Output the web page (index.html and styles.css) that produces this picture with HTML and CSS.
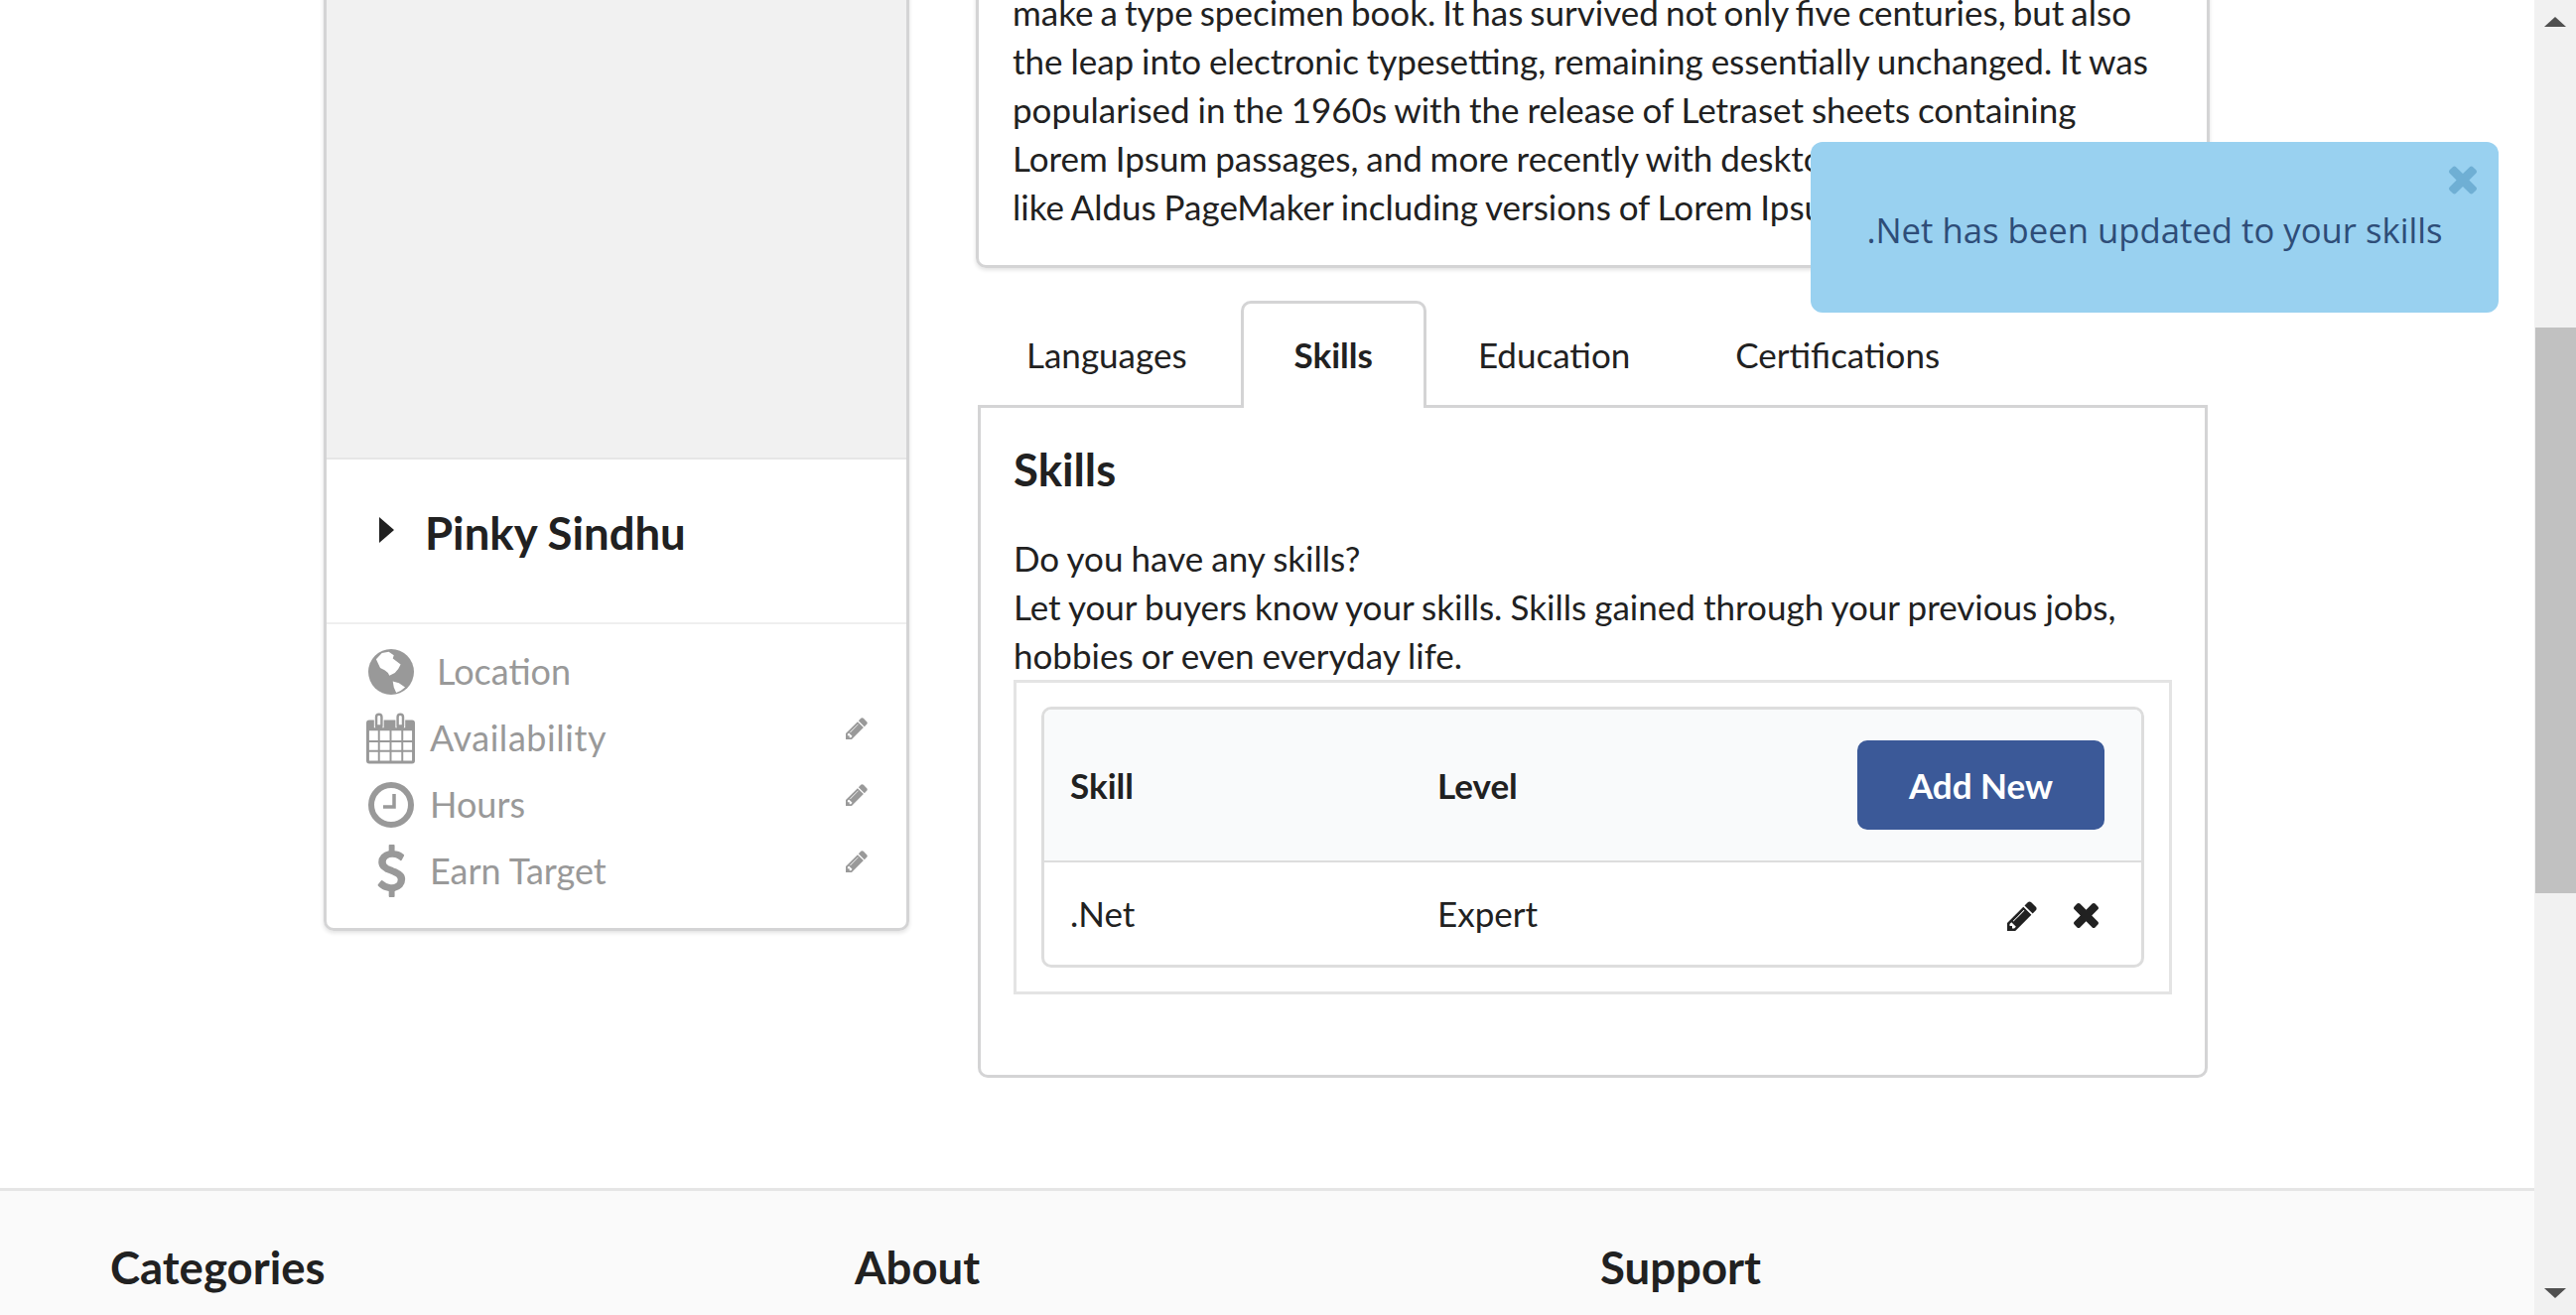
FILE: index.html

```html
<!DOCTYPE html>
<html lang="en">
<head>
  <meta charset="UTF-8" />
  <title>Profile</title>
  <link rel="stylesheet" href="styles.css">
</head>
<body>
  <svg class="svg-defs" width="0" height="0">
    <symbol id="i-pencil" viewBox="128 128 1536 1536"><path d="M491 1536l91-91-235-235-91 91v107h128v128h107zm523-928q0-22-22-22-10 0-17 7l-542 542q-7 7-7 17 0 22 22 22 10 0 17-7l542-542q7-7 7-17zm-54-192l416 416-832 832h-416v-416zm683 96q0 53-37 90l-166 166-416-416 166-165q36-38 90-38 53 0 91 38l235 234q37 39 37 91z"/></symbol>
    <symbol id="i-close" viewBox="110 366 1188 1188"><path d="M1298 1322q0 40-28 68l-136 136q-28 28-68 28t-68-28l-294-294-294 294q-28 28-68 28t-68-28l-136-136q-28-28-28-68t28-68l294-294-294-294q-28-28-28-68t28-68l136-136q28-28 68-28t68 28l294 294 294-294q28-28 68-28t68 28l136 136q28 28 28 68t-28 68l-294 294 294 294q28 28 28 68z"/></symbol>
  </svg>

  <div class="page">
    <main class="main">
      <aside class="seller-card">
        <div class="seller-photo"></div>
        <div class="seller-name">
          <span class="caret"></span>
          <h2>Pinky Sindhu</h2>
        </div>
        <ul class="seller-info">
          <li class="info-row location">
            <svg class="info-icon globe" viewBox="0 0 134 134">
              <circle cx="67" cy="67" r="67" fill="#999"/>
              <path fill="#fff" d="M23 30L40 12l20-4 15 10-3 10 23 17-7 13-10 12-16 8-4-8-10-8-13-7zM72 95l18 5 18 12-13 10-13 6-7-16z"/>
            </svg>
            <span>Location</span>
          </li>
          <li class="info-row">
            <svg class="info-icon calendar" viewBox="0 0 50 52">
              <path fill="#999" d="M3 7h44a3 3 0 0 1 3 3v39a3 3 0 0 1-3 3H3a3 3 0 0 1-3-3V10a3 3 0 0 1 3-3z"/>
              <path fill="#fff" d="M8 3a5 3 0 0 1 10 0v12H8zM30 3a5 3 0 0 1 10 0v12H30z"/>
              <path fill="#999" d="M9 4a4 4 0 0 1 8 0v9a4 4 0 0 1-8 0zM31 4a4 4 0 0 1 8 0v9a4 4 0 0 1-8 0z"/>
              <path fill="#fff" d="M11.500 4a1.500 1.500 0 0 1 3 0v8h-3zM33.500 4a1.500 1.500 0 0 1 3 0v8h-3z"/>
              <path fill="#fff" d="M3 18h9v10H3zM14 18h10v10H14zM26 18h10v10H26zM38 18h9v10h-9zM3 30h9v8H3zM14 30h10v8H14zM26 30h10v8H26zM38 30h9v8h-9zM3 40h9v9H3zM14 40h10v9H14zM26 40h10v9H26zM38 40h9v9h-9z"/>
            </svg>
            <span class="avail">Availability</span>
            <svg class="edit-icon"><use href="#i-pencil"/></svg>
          </li>
          <li class="info-row">
            <svg class="info-icon clock" viewBox="0 0 46 46">
              <circle cx="23" cy="23" r="20" fill="none" stroke="#999" stroke-width="6"/>
              <path fill="none" stroke="#999" stroke-width="3.5" d="M26 12v13H15"/>
            </svg>
            <span>Hours</span>
            <svg class="edit-icon"><use href="#i-pencil"/></svg>
          </li>
          <li class="info-row">
            <span class="info-icon dollar-box">
              <svg class="dollar" viewBox="430 0 940 1792"><path fill="#999" d="M1362 1185q0 153-99.5 263.5t-258.5 136.5v175q0 14-9 23t-23 9h-135q-13 0-22.5-9.5t-9.5-22.5v-175q-66-9-127.5-31t-101.5-44.5-74-48-46.5-37.5-17.5-18q-17-21-2-41l103-135q7-10 23-12 15-2 24 9l2 2q113 99 243 125 37 8 74 8 81 0 142.5-43t61.5-122q0-28-15-53t-33.5-42-58.5-37.5-66-32-80-32.5q-39-16-61.5-25t-61.5-26.5-62.5-31-56.5-35.5-53.5-42.5-43.5-49-35.5-58-21-66.5-8.5-78q0-138 98-242t255-134v-180q0-13 9.5-22.5t22.5-9.5h135q14 0 23 9t9 23v176q57 6 110.5 23t87 33.5 63.5 37.5 39 29 15 14q17 18 5 38l-81 146q-8 15-23 16-14 3-27-7-3-3-14.5-12t-39-26.5-58.5-32-74.5-26-85.5-11.5q-95 0-155 43t-60 111q0 26 8.5 48t29.5 41.5 39.5 33 56 31 60.5 27 70 27.5q53 20 81 31.5t76 35 75.5 42.5 62 50 53 63.5 31.5 76.5 13 94z"/></svg>
            </span>
            <span>Earn Target</span>
            <svg class="edit-icon"><use href="#i-pencil"/></svg>
          </li>
        </ul>
      </aside>

      <section class="profile">
        <div class="description">
          <p>make a type specimen book. It has survived not only five centuries, but also the leap into electronic typesetting, remaining essentially unchanged. It was popularised in the 1960s with the release of Letraset sheets containing Lorem Ipsum passages, and more recently with desktop publishing software like Aldus PageMaker including versions of Lorem Ipsum.</p>
        </div>

        <div class="tabs">
          <a class="tab">Languages</a>
          <a class="tab active">Skills</a>
          <a class="tab">Education</a>
          <a class="tab">Certifications</a>
        </div>

        <div class="tab-panel">
          <h3>Skills</h3>
          <p>Do you have any skills?<br>Let your buyers know your skills. Skills gained through your previous jobs, hobbies or even everyday life.</p>
          <div class="table-box">
            <table class="skills-table">
              <thead>
                <tr>
                  <th class="col-skill">Skill</th>
                  <th>Level</th>
                  <th class="col-action"><button class="add-btn">Add New</button></th>
                </tr>
              </thead>
              <tbody>
                <tr>
                  <td>.Net</td>
                  <td>Expert</td>
                  <td class="col-action">
                    <div class="row-actions">
                      <svg class="row-pencil"><use href="#i-pencil"/></svg>
                      <svg class="row-close"><use href="#i-close"/></svg>
                    </div>
                  </td>
                </tr>
              </tbody>
            </table>
          </div>
        </div>
      </section>
    </main>

    <footer class="footer">
      <h4>Categories</h4>
      <h4>About</h4>
      <h4>Support</h4>
    </footer>
  </div>

  <div class="scrollbar">
    <span class="arrow-up"></span>
    <div class="thumb"></div>
    <span class="arrow-down"></span>
  </div>

  <div class="toast">
    <svg class="toast-close"><use href="#i-close"/></svg>
    <span>.Net has been updated to your skills</span>
  </div>
</body>
</html>
```

FILE: styles.css

```css
html, body {
  height: 100%;
}
body {
  margin: 0;
  display: flex;
  overflow: hidden;
  font-family: Lato, "Liberation Sans", sans-serif;
  font-size: 35px;
  line-height: 49px;
  color: #212121;
  background: #fff;
}
h2, h3, h4, p, ul {
  margin: 0;
  padding: 0;
}
.svg-defs {
  position: absolute;
}
.page {
  flex: 1;
  min-width: 0;
  height: 1325px;
  overflow: hidden;
}
.main {
  display: flex;
  align-items: flex-start;
  gap: 67px;
  margin-top: -40px;
  padding-left: 326px;
}

/* seller card */
.seller-card {
  width: 590px;
  flex: none;
  box-sizing: border-box;
  border: 3px solid #d4d4d5;
  border-radius: 10px;
  box-shadow: 0 2px 4px rgba(0, 0, 0, .12);
}
.seller-photo {
  height: 498px;
  background: #f1f1f1;
  border-bottom: 2px solid #e6e6e6;
}
.seller-name {
  display: flex;
  align-items: center;
  gap: 31px;
  box-sizing: border-box;
  height: 166px;
  padding: 0 0 16px 53px;
  border-bottom: 2px solid #efefef;
}
.seller-name h2 {
  font-size: 45.5px;
  font-weight: 700;
  line-height: 58px;
}
.caret {
  width: 0;
  height: 0;
  margin-bottom: 6px;
  border-left: 15px solid #212121;
  border-top: 13px solid transparent;
  border-bottom: 13px solid transparent;
}
.seller-info {
  list-style: none;
  padding: 14px 39px 24px 40px;
  font-size: 36px;
  color: #999;
}
.info-row {
  display: flex;
  align-items: center;
  height: 67px;
}
.info-icon {
  width: 50px;
  flex: none;
  margin-right: 14px;
}
.location span {
  margin-left: 7px;
}
.avail {
  letter-spacing: .55px;
}
.globe {
  width: 46px;
  height: 46px;
  margin-left: 2px;
  margin-right: 16px;
}
.calendar {
  width: 49px;
  height: 52px;
  margin-right: 15px;
}
.clock {
  width: 46px;
  height: 46px;
  margin-left: 2px;
  margin-right: 16px;
}
.dollar-box {
  display: flex;
  justify-content: center;
}
.dollar {
  width: 29px;
  height: 53px;
}
.edit-icon {
  width: 22px;
  height: 22px;
  margin-left: auto;
  margin-bottom: 20px;
  fill: #999;
}

/* right column */
.profile {
  width: 1243px;
  flex: none;
}
.description {
  box-sizing: border-box;
  height: 310px;
  padding: 25px 34px 0;
  border: 3px solid #d4d4d5;
  border-radius: 10px;
  box-shadow: 0 2px 4px rgba(0, 0, 0, .12);
  word-spacing: -1.1px;
}
.description p::first-line {
  word-spacing: -1.900px;
}
.tabs {
  display: flex;
  margin: 33px 0 -3px -3px;
}
.tab {
  box-sizing: border-box;
  height: 108px;
  padding: 27px 51px 0;
  border: 3px solid transparent;
  border-bottom: 0;
  border-radius: 10px 10px 0 0;
}
.tab.active + .tab,
.tab:last-child {
  margin-left: -2px;
}
.tab.active {
  position: relative;
  font-weight: 700;
  background: #fff;
  border-color: #d4d4d5;
}
.tab-panel {
  box-sizing: border-box;
  margin: 0 2px;
  height: 678px;
  padding: 33px 33px 0;
  border: 3px solid #d4d4d5;
  border-radius: 0 0 10px 10px;
}
.tab-panel h3 {
  margin-bottom: 36px;
  font-size: 45.5px;
  font-weight: 700;
  line-height: 58px;
}
.tab-panel p {
  word-spacing: -.8px;
}
.table-box {
  padding: 24px 25px;
  border: 3px solid #e4e4e4;
}
.skills-table {
  width: 100%;
  border-collapse: separate;
  border-spacing: 0;
  border: 3px solid #ddd;
  border-radius: 10px;
}
.skills-table th {
  height: 152px;
  padding: 0 26px;
  text-align: left;
  font-weight: 700;
  background: #f9fafb;
  border-bottom: 2px solid #ddd;
}
.skills-table th:first-child {
  border-top-left-radius: 7px;
}
.skills-table th:last-child {
  border-top-right-radius: 7px;
}
.skills-table td {
  height: 103px;
  padding: 0 26px;
}
.col-skill {
  width: 318px;
}
.col-action {
  text-align: right;
}
.skills-table th.col-action {
  width: 300px;
  padding-right: 37px;
  text-align: right;
}
.add-btn {
  width: 249px;
  height: 90px;
  padding: 0;
  border: 0;
  border-radius: 10px;
  font: 700 35px Lato, "Liberation Sans", sans-serif;
  color: #fff;
  background: #3b5998;
}
.row-actions {
  display: flex;
  justify-content: flex-end;
  align-items: center;
  gap: 37px;
  margin: 4px 17px 0 0;
}
.row-pencil {
  width: 30px;
  height: 30px;
  fill: #212121;
}
.row-close {
  width: 25px;
  height: 25px;
  fill: #212121;
}

/* footer */
.footer {
  display: grid;
  grid-template-columns: 750px 751px 1fr;
  margin-top: 111px;
  padding: 48px 0 0 111px;
  height: 200px;
  background: #fafafa;
  border-top: 3px solid #e5e5e5;
}
.footer h4 {
  font-size: 45.5px;
  font-weight: 700;
  line-height: 58px;
}

/* scrollbar */
.scrollbar {
  position: relative;
  width: 42px;
  flex: none;
  height: 1325px;
  background: #f1f1f1;
}
.thumb {
  position: absolute;
  top: 330px;
  left: 1px;
  right: 0;
  height: 570px;
  background: #c1c1c1;
}
.arrow-up, .arrow-down {
  position: absolute;
  left: 10px;
  width: 0;
  height: 0;
  border-left: 11px solid transparent;
  border-right: 11px solid transparent;
}
.arrow-up {
  top: 17px;
  border-bottom: 10px solid #505050;
}
.arrow-down {
  top: 1298px;
  border-top: 10px solid #505050;
}

/* toast */
.toast {
  position: fixed;
  top: 143px;
  left: 1824px;
  box-sizing: border-box;
  width: 693px;
  height: 172px;
  padding-top: 5px;
  display: flex;
  align-items: center;
  justify-content: center;
  border-radius: 12px;
  font-family: "Open Sans", sans-serif;
  font-size: 34.700px;
  color: #2e4d78;
  background: #99d1f0;
}
.toast-close {
  position: absolute;
  top: 24px;
  right: 22px;
  width: 28px;
  height: 29px;
  fill: #6fafd4;
}
```
